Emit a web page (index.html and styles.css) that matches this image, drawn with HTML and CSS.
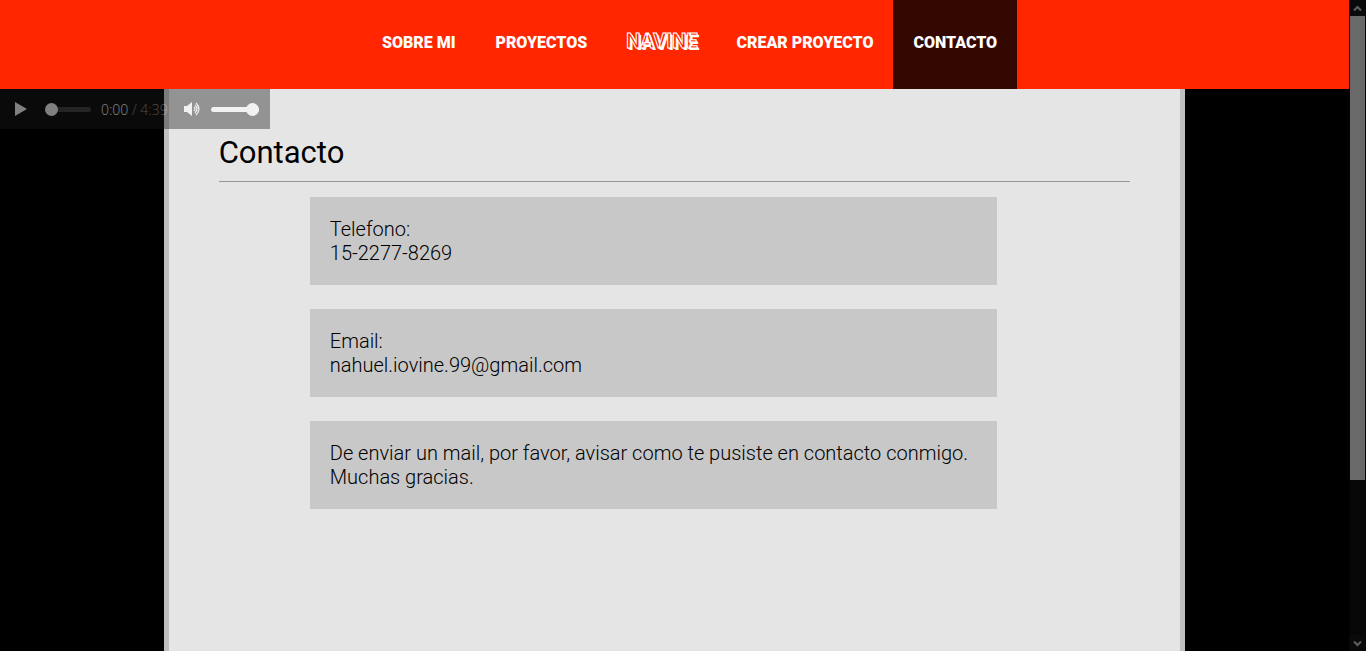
FILE: index.html
```html
<!DOCTYPE html>
<html lang="es">
<head>
<meta charset="utf-8">
<meta name="viewport" content="width=device-width, initial-scale=1">
<title>Navine - Contacto</title>
<link rel="stylesheet" href="styles.css">
</head>
<body>
<div class="window">
  <div class="page">
    <header class="header">
      <nav class="nav">
        <a class="nav-link" href="#sobre-mi">SOBRE MI</a>
        <a class="nav-link" href="#proyectos">PROYECTOS</a>
        <a class="nav-link logo" href="#inicio">NAVINE</a>
        <a class="nav-link" href="#crear">CREAR PROYECTO</a>
        <a class="nav-link active" href="#contacto" aria-current="page">CONTACTO</a>
      </nav>
    </header>
    <div class="body">
      <div class="player">
        <button class="player-button" type="button" aria-label="Reproducir">
          <svg width="14" height="16" viewBox="0 0 14 16"><path d="M1 1 13 8 1 15Z" fill="#fff"/></svg>
        </button>
        <input class="slider seek" type="range" min="0" max="279" value="0" aria-label="Posición">
        <span class="time">0:00 <span class="duration">/ 4:39</span></span>
        <button class="player-button volume-button" type="button" aria-label="Silenciar">
          <svg width="18" height="16" viewBox="0 0 18 16"><path d="M1 5H4L9 1V15L4 11H1Z" fill="#fff"/><path d="M11 6Q13 8 11 10M12 4Q16 8 12 12M13 2Q19 8 13 14" fill="none" stroke="#fff" stroke-width="1.2"/></svg>
        </button>
        <input class="slider volume" type="range" min="0" max="100" value="100" aria-label="Volumen">
      </div>
      <main class="content">
        <h1 class="title">Contacto</h1>
        <section class="card">Telefono:<br>15-2277-8269</section>
        <section class="card">Email:<br>nahuel.iovine.99@gmail.com</section>
        <section class="card">De enviar un mail, por favor, avisar como te pusiste en contacto conmigo.<br>Muchas gracias.</section>
      </main>
    </div>
  </div>
  <div class="scrollbar">
    <button class="scroll-button" type="button" aria-label="Subir">
      <svg width="9" height="7" viewBox="0 0 9 7"><path d="M1 5.5 4.500 2 8 5.500" fill="none" stroke="#606060" stroke-width="2"/></svg>
    </button>
    <div class="scroll-track"><div class="scroll-thumb"></div></div>
    <button class="scroll-button" type="button" aria-label="Bajar">
      <svg width="9" height="7" viewBox="0 0 9 7"><path d="M1 1.500 4.500 5 8 1.500" fill="none" stroke="#606060" stroke-width="2"/></svg>
    </button>
  </div>
</div>
</body>
</html>
```
FILE: styles.css
```css
* { box-sizing: border-box; }

body {
  margin: 0;
  background: #000;
  font-family: Roboto, "Liberation Sans", sans-serif;
}

button {
  padding: 0;
  border: 0;
  background: none;
}

svg { display: block; }

.window {
  display: flex;
  height: 100vh;
}

.page {
  flex: 1;
  display: flex;
  flex-direction: column;
  min-width: 0;
}

.header { background: #ff2600; }

.nav {
  display: flex;
  justify-content: center;
  padding-left: 30px;
}

.nav-link {
  padding: 33px 20px 36px;
  color: #fff;
  font-size: 16px;
  font-weight: 900;
  line-height: 20px;
  text-decoration: none;
}

.nav-link.active { background: #330800; }

.logo {
  padding: 31px 19px 38px;
  color: #ff2600;
  font-size: 20px;
  font-weight: 700;
  -webkit-text-stroke: 1px #fff;
  text-shadow: 1px 1px #fff, 2px 2px #fff;
}

.body {
  position: relative;
  flex: 1;
  display: flex;
  justify-content: center;
  min-height: 0;
}

.player {
  position: absolute;
  top: 0;
  left: 0;
  display: flex;
  align-items: center;
  height: 40px;
  padding: 0 11px 0 14px;
  background: rgba(26, 26, 26, 0.8);
  opacity: 0.5;
}

.slider {
  appearance: none;
  height: 14px;
  margin: 0;
  background: none;
}

.slider::-webkit-slider-runnable-track {
  height: 5px;
  border-radius: 3px;
  background: #fff;
}

.slider::-webkit-slider-thumb {
  appearance: none;
  width: 13px;
  height: 13px;
  margin-top: -4px;
  border-radius: 50%;
  background: #fff;
}

.seek {
  width: 46px;
  margin-left: 17px;
}

.seek::-webkit-slider-runnable-track { background: #484848; }

.time {
  width: 82px;
  padding-left: 10px;
  color: #fff;
  font-family: "Open Sans", "Noto Sans", sans-serif;
  font-size: 14px;
  font-weight: 300;
  white-space: nowrap;
}

.duration { color: #999; }

.volume-button { margin-left: 10px; }

.volume {
  width: 48px;
  margin-left: 10px;
}

.content {
  width: calc(75% + 10px);
  padding: 40px 50px;
  border: solid #bfbfbf;
  border-width: 0 5px;
  background: #e5e5e5;
}

.title {
  margin: 0 0 15px;
  padding: 4px 0 8px;
  border-bottom: 1px solid #969696;
  font-size: 31px;
  font-weight: 400;
  line-height: 40px;
}

.card {
  width: calc(71% + 40px);
  margin: 0 0 24px 10%;
  padding: 20px;
  background: #c8c8c8;
  font-size: 20px;
  font-weight: 300;
  line-height: 24px;
}

.scrollbar {
  display: flex;
  flex-direction: column;
  width: 17px;
  padding: 0 1px;
  background: #060606;
}

.scroll-button {
  display: grid;
  place-items: center;
  height: 16px;
  background: #090a0c;
}

.scroll-track { flex: 1; }

.scroll-thumb {
  height: 75%;
  background: #696969;
}
```
